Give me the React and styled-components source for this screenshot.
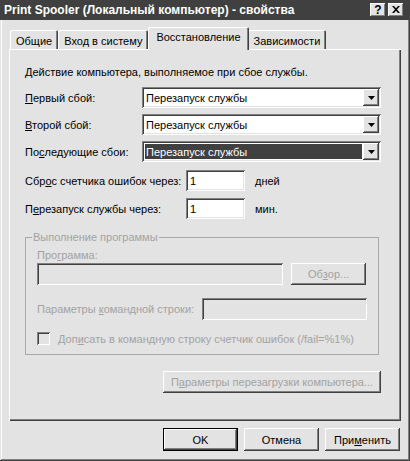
import React from "react";
import styled, { createGlobalStyle, css } from "styled-components";

const FACE = "#e3e3e3";
const DARK = "#404040";
const SHADOW = "#808080";
const LIGHT = "#ffffff";
const DISABLED = "#a2a2a2";

const Global = createGlobalStyle`
  html, body { margin: 0; padding: 0; background: ${FACE}; }
  body {
    font-family: "Liberation Sans", Arial, sans-serif;
    font-size: 11px;
    color: #000;
  }
  * { box-sizing: border-box; }
`;

const raised = css`
  box-shadow: inset -1px -1px ${DARK}, inset 1px 1px ${LIGHT},
    inset -2px -2px ${SHADOW}, inset 2px 2px ${FACE};
`;

const sunken = css`
  box-shadow: inset 1px 1px ${SHADOW}, inset -1px -1px ${LIGHT},
    inset 2px 2px ${DARK}, inset -2px -2px ${FACE};
`;

const Window = styled.div`
  width: 410px;
  height: 461px;
  background: ${FACE};
  display: flex;
  flex-direction: column;
  box-shadow: inset -1px -1px ${DARK}, inset 1px 1px ${FACE},
    inset -2px -2px ${SHADOW}, inset 2px 2px ${LIGHT};
`;

const TitleBar = styled.div`
  height: 20px;
  flex: none;
  background: #404040;
  display: flex;
  align-items: center;
  padding: 0 6px 0 4px;
`;

const TitleText = styled.div`
  flex: 1;
  color: #fff;
  font-weight: bold;
  font-size: 12px;
  white-space: nowrap;
`;

const CaptionButtons = styled.div`
  display: flex;
  gap: 2px;
`;

const CaptionButton = styled.div`
  width: 16px;
  height: 14px;
  background: ${FACE};
  ${raised};
  display: flex;
  align-items: center;
  justify-content: center;
  font-weight: bold;
  font-size: 12px;
  line-height: 14px;
  padding-bottom: 1px;
`;

const Body = styled.div`
  flex: 1;
  display: flex;
  flex-direction: column;
  padding: 7px 9px 0 9px;
`;

const TabStrip = styled.div`
  height: 22px;
  display: flex;
  align-items: flex-end;
  padding-left: 1px;
`;

const Tab = styled.div`
  position: relative;
  height: ${(p) => (p.$active ? "23px" : "19px")};
  margin: ${(p) => (p.$active ? "0 -1px -1px 0" : "0")};
  z-index: ${(p) => (p.$active ? 1 : 0)};
  padding: 0 ${(p) => (p.$active ? "8px" : "6px")};
  display: flex;
  align-items: center;
  padding-top: ${(p) => (p.$active ? "0" : "2px")};
  padding-bottom: ${(p) => (p.$active ? "4px" : "0")};
  background: ${FACE};
  border-radius: 2px 2px 0 0;
  white-space: nowrap;
  box-shadow: inset 1px 1px ${LIGHT}, inset -1px 0 ${DARK},
    inset -2px 0 ${SHADOW};
`;

const Panel = styled.div`
  height: 372px;
  flex: none;
  display: flex;
  flex-direction: column;
  padding: 16px 20px 0 16px;
  box-shadow: inset 1px 1px ${LIGHT}, inset -1px -1px ${DARK},
    inset -2px -2px ${SHADOW};
`;

const Text = styled.div`
  line-height: 14px;
  white-space: nowrap;
  color: ${(p) => (p.$disabled ? DISABLED : "#000")};
`;

const SubLabel = styled(Text)`
  margin-top: 4px;
`;

const ComboRow = styled.div`
  display: grid;
  grid-template-columns: 117px 239px;
  align-items: center;
  height: 21px;
  margin-top: ${(p) => p.$top}px;
`;

const Combo = styled.div`
  height: 21px;
  background: #fff;
  ${sunken};
  display: flex;
  padding: 2px;
`;

const ComboValue = styled.div`
  flex: 1;
  display: flex;
  align-items: center;
  margin: ${(p) => (p.$selected ? "1px" : "0")};
  padding-left: ${(p) => (p.$selected ? "1px" : "2px")};
  background: ${(p) => (p.$selected ? "#404040" : "transparent")};
  color: ${(p) => (p.$selected ? "#fff" : "#000")};
  white-space: nowrap;
`;

const DropButton = styled.div`
  width: 16px;
  height: 17px;
  background: ${FACE};
  ${raised};
  display: flex;
  align-items: center;
  justify-content: center;
`;

const DelayRow = styled.div`
  display: grid;
  grid-template-columns: 161px 59px auto;
  align-items: center;
  height: 21px;
  margin-top: ${(p) => p.$top}px;
`;

const Field = styled.div`
  height: ${(p) => p.$h || 21}px;
  width: ${(p) => (p.$w ? `${p.$w}px` : "auto")};
  background: ${(p) => (p.$disabled ? FACE : "#fff")};
  ${sunken};
  display: flex;
  align-items: center;
  padding-left: 4px;
`;

const Unit = styled.div`
  margin-left: 10px;
`;

const Group = styled.fieldset`
  margin: 11px 2px 0 0;
  padding: 0 12px 9px 11px;
  border: 1px solid #a8a8a8;
  min-width: 0;
`;

const Legend = styled.legend`
  padding: 0 1px;
  margin-left: -5px;
  line-height: 14px;
  color: ${DISABLED};
`;

const ProgramRow = styled.div`
  display: flex;
  gap: 8px;
  margin-top: 1px;
`;

const CmdRow = styled.div`
  display: grid;
  grid-template-columns: 165px 165px;
  align-items: center;
  margin-top: 13px;
`;

const CheckRow = styled.div`
  display: flex;
  align-items: center;
  height: 13px;
  margin-top: 12px;
`;

const CheckBox = styled.div`
  width: 13px;
  height: 13px;
  flex: none;
  background: ${FACE};
  ${sunken};
  margin-right: 8px;
`;

const Button = styled.div`
  width: ${(p) => p.$w}px;
  height: ${(p) => p.$h || 22}px;
  background: ${FACE};
  display: flex;
  align-items: center;
  justify-content: center;
  white-space: nowrap;
  color: ${(p) => (p.$disabled ? DISABLED : "#000")};
  ${(p) =>
    p.$default
      ? css`
          box-shadow: inset 0 0 0 1px #000, inset -2px -2px ${DARK},
            inset 2px 2px ${LIGHT}, inset -3px -3px ${SHADOW};
        `
      : raised};
`;

const RestartButton = styled(Button)`
  align-self: flex-end;
  margin-top: 16px;
`;

const Footer = styled.div`
  display: flex;
  justify-content: flex-end;
  gap: 6px;
  margin-top: 7px;
  padding-right: 1px;
`;

const Arrow = () => (
  <svg width="7" height="4" viewBox="0 0 7 4">
    <polygon points="0,0 7,0 3.5,4" fill="#000" />
  </svg>
);

const CloseGlyph = () => (
  <svg width="8" height="7" viewBox="0 0 8 7">
    <path d="M0 0h2l2 2.2L6 0h2L5 3.5 8 7H6L4 4.8 2 7H0l3-3.5z" fill="#000" />
  </svg>
);

const ComboBox = ({ value, selected }) => (
  <Combo>
    <ComboValue $selected={selected}>{value}</ComboValue>
    <DropButton>
      <Arrow />
    </DropButton>
  </Combo>
);

export default function App() {
  return (
    <>
      <Global />
      <Window>
        <TitleBar>
          <TitleText>Print Spooler (Локальный компьютер) - свойства</TitleText>
          <CaptionButtons>
            <CaptionButton>?</CaptionButton>
            <CaptionButton>
              <CloseGlyph />
            </CaptionButton>
          </CaptionButtons>
        </TitleBar>
        <Body>
          <TabStrip>
            <Tab>Общие</Tab>
            <Tab>Вход в систему</Tab>
            <Tab $active>Восстановление</Tab>
            <Tab>Зависимости</Tab>
          </TabStrip>
          <Panel>
            <Text>Действие компьютера, выполняемое при сбое службы.</Text>

            <ComboRow $top={8}>
              <Text>
                <u>П</u>ервый сбой:
              </Text>
              <ComboBox value="Перезапуск службы" />
            </ComboRow>
            <ComboRow $top={6}>
              <Text>
                <u>В</u>торой сбой:
              </Text>
              <ComboBox value="Перезапуск службы" />
            </ComboRow>
            <ComboRow $top={6}>
              <Text>
                По<u>с</u>ледующие сбои:
              </Text>
              <ComboBox value="Перезапуск службы" selected />
            </ComboRow>

            <DelayRow $top={8}>
              <Text>
                Сбр<u>о</u>с счетчика ошибок через:
              </Text>
              <Field>1</Field>
              <Unit>дней</Unit>
            </DelayRow>
            <DelayRow $top={7}>
              <Text>
                П<u>е</u>резапуск службы через:
              </Text>
              <Field>1</Field>
              <Unit>мин.</Unit>
            </DelayRow>

            <Group>
              <Legend>Выполнение программы</Legend>
              <SubLabel $disabled>
                Про<u>г</u>рамма:
              </SubLabel>
              <ProgramRow>
                <Field $disabled $w={247} $h={22} />
                <Button $w={75} $disabled>
                  Об<u>з</u>ор...
                </Button>
              </ProgramRow>
              <CmdRow>
                <Text $disabled>
                  Параметры <u>к</u>омандной строки:
                </Text>
                <Field $disabled $h={22} />
              </CmdRow>
              <CheckRow>
                <CheckBox />
                <Text $disabled>
                  Доп<u>и</u>сать в командную строку счетчик ошибок (/fail=%1%)
                </Text>
              </CheckRow>
            </Group>

            <RestartButton $w={218} $disabled>
              П<u>а</u>раметры перезагрузки компьютера...
            </RestartButton>
          </Panel>
          <Footer>
            <Button $w={75} $h={23} $default>
              OK
            </Button>
            <Button $w={75} $h={23}>
              Отмена
            </Button>
            <Button $w={75} $h={23}>
              При<u>м</u>енить
            </Button>
          </Footer>
        </Body>
      </Window>
    </>
  );
}
